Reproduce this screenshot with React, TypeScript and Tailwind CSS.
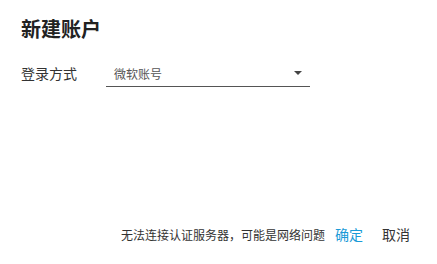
export default function App() {
  return (
    <div
      className="w-[437px] h-[264px] bg-white flex flex-col text-[#333]"
      style={{ fontFamily: '"Noto Sans CJK SC", "Noto Sans", sans-serif' }}
    >
      {/* Header */}
      <div className="pl-[21px] pt-[15px]">
        <h1 className="text-[20px] leading-[28px] font-bold text-[#222]">新建账户</h1>
      </div>

      {/* Form row */}
      <div className="flex items-end pl-[21px] mt-[18px]">
        <label className="w-[85px] text-[14px] leading-[22px] pb-[3px] text-[#333]">登录方式</label>
        <div className="w-[204px] h-[26px] flex items-center justify-between border-b border-[#555] pl-[8px] pr-[8px]">
          <span className="text-[12px] text-[#555]">微软账号</span>
          <span className="w-0 h-0 mb-[2px] border-l-[4px] border-r-[4px] border-t-[4px] border-l-transparent border-r-transparent border-t-[#444]" />
        </div>
      </div>

      <div className="flex-1" />

      {/* Footer */}
      <div className="flex items-center pl-[121px] pb-[19px]">
        <span className="text-[12px] text-[#333]">无法连接认证服务器，可能是网络问题</span>
        <button className="ml-[10px] text-[14px] text-[#1a9bd7]">确定</button>
        <button className="ml-[19px] text-[14px] text-[#333]">取消</button>
      </div>
    </div>
  );
}
